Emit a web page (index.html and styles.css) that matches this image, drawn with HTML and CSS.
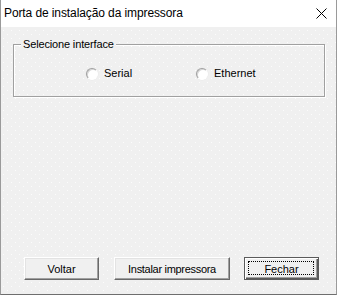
FILE: index.html
```html
<!DOCTYPE html>
<html lang="pt-BR">
<head>
    <meta charset="UTF-8">
    <title>Porta de instalação da impressora</title>
    <link rel="stylesheet" href="styles.css">
</head>
<body>

<div class="window">
    <!-- Barra de título -->
    <div class="titlebar">
        <span class="title">Porta de instalação da impressora</span>
        <svg class="close" width="11" height="11" viewBox="0 0 11 11">
            <path d="M0.5 0.5 L10.5 10.5 M10.5 0.5 L0.5 10.5" stroke="#000" stroke-width="1" fill="none"/>
        </svg>
    </div>

    <div class="client">
        <!-- Grupo de interface -->
        <div class="group">
            <span class="group-label">Selecione interface</span>
            <div class="radios">
                <label class="radio radio-serial"><span class="dot"></span>Serial</label>
                <label class="radio"><span class="dot"></span>Ethernet</label>
            </div>
        </div>

        <!-- Botões -->
        <div class="buttons">
            <button class="btn btn-voltar">Voltar</button>
            <button class="btn btn-instalar">Instalar impressora</button>
            <button class="btn btn-default">Fechar</button>
        </div>
    </div>
</div>

</body>
</html>
```

FILE: styles.css
```css
html, body {
    margin: 0;
    padding: 0;
}
body {
    width: 337px;
    height: 295px;
    font-family: "Liberation Sans", Arial, sans-serif;
    font-size: 11px;
    color: #000;
    background: #fff;
}
.window {
    box-sizing: border-box;
    width: 337px;
    height: 295px;
    display: flex;
    flex-direction: column;
    border: 1px solid #9a9a9a;
    border-top: none;
    border-bottom-color: #6e6e6e;
}
.titlebar {
    height: 26px;
    flex: none;
    display: flex;
    align-items: center;
    justify-content: space-between;
    padding: 0 9px 1px 3px;
    background: #fff;
}
.title {
    font-size: 12px;
    letter-spacing: -0.1px;
}
.close {
    display: block;
}
.client {
    flex: 1;
    display: flex;
    flex-direction: column;
    padding: 0 11px 14px 12px;
    background-color: #f0f0f0;
    background-image:
        conic-gradient(at 1px 1px, transparent 75%, #fcfcfc 0),
        conic-gradient(at 1px 1px, transparent 75%, #fcfcfc 0);
    background-size: 8px 8px, 8px 8px;
    background-position: 2px 3px, 6px 7px;
}
.group {
    box-sizing: border-box;
    height: 53px;
    margin-top: 17px;
    border: 1px solid #a0a0a0;
    box-shadow: 1px 1px 0 #fff, inset 1px 1px 0 #fff;
}
.group-label {
    display: block;
    width: max-content;
    line-height: 13px;
    margin: -7px 0 0 7px;
    padding: 0 2px;
    letter-spacing: -0.15px;
    background: #f0f0f0;
}
.radios {
    display: flex;
    align-items: center;
    line-height: 13px;
    margin-top: 16px;
    padding-left: 72px;
}
.radio {
    display: flex;
    align-items: center;
}
.radio-serial {
    width: 110px;
}
.dot {
    box-sizing: border-box;
    width: 12px;
    height: 12px;
    margin-right: 6px;
    border-radius: 50%;
    background: #fff;
    border: 1px solid;
    border-color: #a0a0a0 #fff #fff #a0a0a0;
    box-shadow: inset 1px 1px 0 #d6d6d6, 0 0 0 0.5px #e8e8e8;
}
.buttons {
    margin-top: auto;
    display: flex;
    padding-left: 11px;
}
.btn {
    box-sizing: border-box;
    height: 23px;
    padding: 0;
    font-family: "Liberation Sans", Arial, sans-serif;
    font-size: 11px;
    color: #000;
    background: #f0f0f0;
    border: 1px solid;
    border-color: #fff #696969 #696969 #fff;
    box-shadow: inset -1px -1px 0 #a0a0a0, inset 1px 1px 0 #e3e3e3;
    border-radius: 0;
}
.btn-voltar {
    width: 75px;
}
.btn-instalar {
    width: 116px;
    margin-left: 15px;
    letter-spacing: -0.3px;
}
.btn-default {
    position: relative;
    width: 75px;
    margin-left: 14px;
    border-color: #5a5a5a;
    box-shadow: inset 1px 1px 0 #fff, inset -1px -1px 0 #5a5a5a, inset -2px -2px 0 #a0a0a0;
}
.btn-default::after {
    content: "";
    position: absolute;
    top: 3px;
    left: 3px;
    right: 4px;
    bottom: 4px;
    border: 1px dotted #000;
}
```
